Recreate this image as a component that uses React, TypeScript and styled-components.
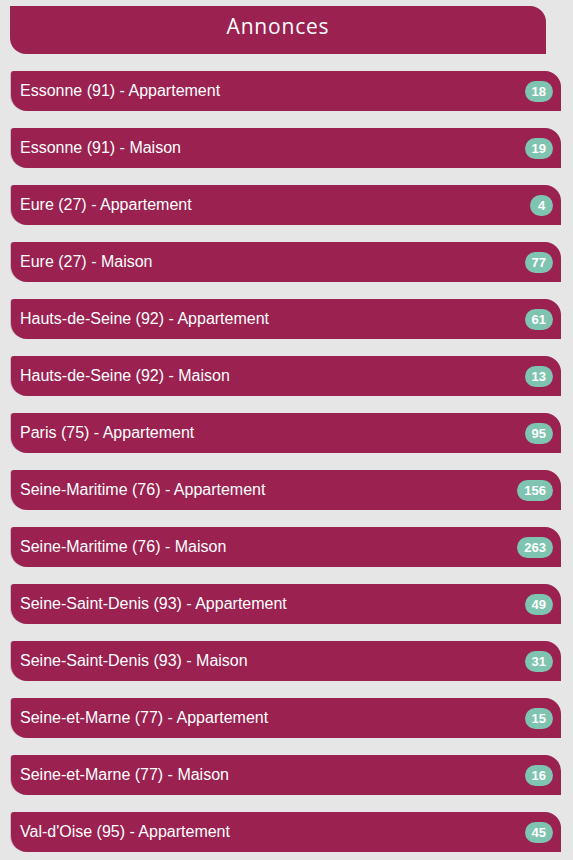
import React from "react";
import styled, { createGlobalStyle } from "styled-components";

const Global = createGlobalStyle`
  html, body { margin: 0; padding: 0; background: #e6e6e6; }
  body { font-family: "Liberation Sans", Arial, sans-serif; }
`;

const Page = styled.div`
  padding: 6px 12px 0 10px;
  display: flex;
  flex-direction: column;
`;

const Header = styled.div`
  width: 536px;
  height: 48px;
  background: #9a2150;
  border-radius: 0 16px 0 16px;
  display: flex;
  justify-content: center;
  padding-top: 6px;
  box-sizing: border-box;
  color: #fff;
  font-family: "Open Sans", "Lato", sans-serif;
  font-size: 21px;
  letter-spacing: 0.8px;
`;

const List = styled.ul`
  list-style: none;
  margin: 17px 0 0 1px;
  padding: 0;
  display: flex;
  flex-direction: column;
  gap: 17px;
`;

const Item = styled.li`
  width: 550px;
  height: 40px;
  background: #9a2150;
  border-radius: 3px 16px 0 16px;
  box-shadow: -1px 0 0 rgba(180, 160, 170, 0.6);
  display: flex;
  align-items: center;
  justify-content: space-between;
  padding: 0 8px 0 9px;
  box-sizing: border-box;
  color: #fff;
  font-size: 16px;
`;

const Badge = styled.span`
  background: #7fc4b0;
  color: #fff;
  font-weight: bold;
  font-size: 13px;
  height: 21px;
  min-width: 9px;
  padding: 0 7px;
  border-radius: 11px;
  display: inline-flex;
  align-items: center;
  justify-content: center;
`;

const items: [string, number][] = [
  ["Essonne (91) - Appartement", 18],
  ["Essonne (91) - Maison", 19],
  ["Eure (27) - Appartement", 4],
  ["Eure (27) - Maison", 77],
  ["Hauts-de-Seine (92) - Appartement", 61],
  ["Hauts-de-Seine (92) - Maison", 13],
  ["Paris (75) - Appartement", 95],
  ["Seine-Maritime (76) - Appartement", 156],
  ["Seine-Maritime (76) - Maison", 263],
  ["Seine-Saint-Denis (93) - Appartement", 49],
  ["Seine-Saint-Denis (93) - Maison", 31],
  ["Seine-et-Marne (77) - Appartement", 15],
  ["Seine-et-Marne (77) - Maison", 16],
  ["Val-d'Oise (95) - Appartement", 45],
];

export default function App() {
  return (
    <>
      <Global />
      <Page>
        <Header>Annonces</Header>
        <List>
          {items.map(([label, n]) => (
            <Item key={label}>
              <span>{label}</span>
              <Badge>{n}</Badge>
            </Item>
          ))}
        </List>
      </Page>
    </>
  );
}
